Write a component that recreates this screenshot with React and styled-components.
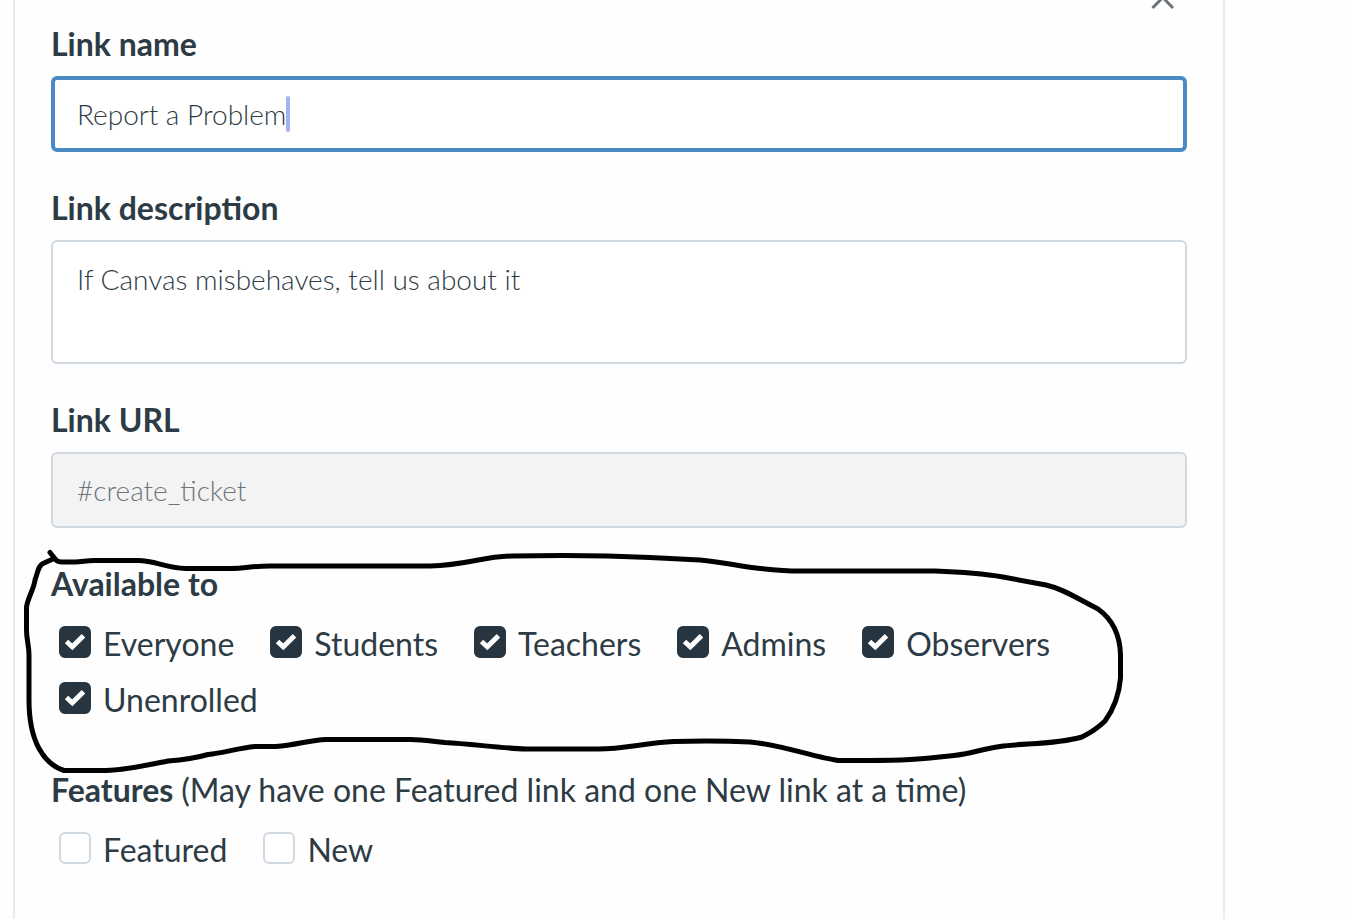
import React, { useState } from 'react'

import styled, { createGlobalStyle, css } from 'styled-components'

const audiences = ['Everyone', 'Students', 'Teachers', 'Admins', 'Observers', 'Unenrolled']
const features = ['Featured', 'New']

const CheckboxOption = ({ label, defaultChecked }) => (
    <Option>
        <BoxWrap>
            <Checkbox type="checkbox" defaultChecked={defaultChecked} />
            <CheckMark viewBox="0 0 32 32" aria-hidden="true">
                <path d="M7.5 15.5L13.3 20.8L24.5 9.8" />
            </CheckMark>
        </BoxWrap>
        {label}
    </Option>
)

const App = () => {
    const [name, setName] = useState('Report a Problem')

    return (
        <>
            <GlobalStyle />
            <Panel>
                <PanelHeader>
                    <CollapseButton type="button" aria-label="Collapse">
                        <svg viewBox="0 0 48 48" aria-hidden="true">
                            <path d="M13.5 32L23.8 21.5L34 32" />
                        </svg>
                    </CollapseButton>
                </PanelHeader>

                <Form>
                    <Field>
                        <Label htmlFor="link-name">Link name</Label>
                        <FocusedBox>
                            <NameInput
                                id="link-name"
                                value={name}
                                onChange={e => setName(e.target.value)}
                            />
                            <Caret />
                        </FocusedBox>
                    </Field>

                    <Field>
                        <Label htmlFor="link-description">Link description</Label>
                        <TextArea
                            id="link-description"
                            defaultValue="If Canvas misbehaves, tell us about it"
                        />
                    </Field>

                    <Field>
                        <Label htmlFor="link-url">Link URL</Label>
                        <UrlInput id="link-url" defaultValue="#create_ticket" disabled />
                    </Field>

                    <Circled>
                        <Group>
                            <Legend>Available to</Legend>
                            <Options>
                                {audiences.map(a => <CheckboxOption key={a} label={a} defaultChecked />)}
                            </Options>
                        </Group>
                        <PenCircle viewBox="20 545 1110 235" aria-hidden="true">
                            <path d="M50 552.5L56 560Q58 562 62 562H75C82 562 86 560.5 94 560.5H138C156 560.5 164 568 186 568.5H230C246 568.5 252 566 270 566H430C468 565 482 556.5 512 556C556 555 610 555.5 650 557.5L700 560C722 562 738 566 756 568C774 570 786 571 800 571H935C965 572 986 574 1003 577L1046 585C1064 589 1078 599 1098 609C1112 619 1120 634 1120.5 655V678C1119 697 1113 710 1105 721C1098 728 1090 733 1082 737C1054 745 1022 743 1000 746.5C982 749 970 754 954 755.5L930 758C906 761 868 760.5 838 760.5C814 757 778 744 750 742C728 741 694 741 674 741.5C644 743 624 749 598 749H526C500 748 472 744 445 742.5C430 741 424 739.5 410 739.5H326C310 740 296 745 276 746.5H255C238 748 224 753 208 754.5C196 758 182 760 168 761C148 765 126 770 106 770.5H64C44 764 29 742 29 700V655C29 645 26.5 640 26.5 630V607C28 597 34 589 35 580C38 572 38 566 43 563.5L54 558.5" />
                        </PenCircle>
                    </Circled>

                    <FeatureGroup>
                        <Legend>
                            Features <LegendNote>(May have one Featured link and one New link at a time)</LegendNote>
                        </Legend>
                        <Options>
                            {features.map(f => <CheckboxOption key={f} label={f} />)}
                        </Options>
                    </FeatureGroup>
                </Form>
            </Panel>
        </>
    )
}

export default App

const GlobalStyle = createGlobalStyle`
    * {
        box-sizing: border-box;
    }

    body {
        margin: 0;
        background: #fefefe;
        color: #2d3b45;
        font-family: Lato, sans-serif;
        font-size: 32px;
        line-height: 40px;
    }
`

const Panel = styled.main`
    min-height: 100vh;
    margin: 0 120px 0 13px;
    padding: 0 36px 40px;
    border: solid #e8eaec;
    border-width: 0 2px;
    display: flow-root;
`

// the panel is scrolled, so its header is half out of view
const PanelHeader = styled.header`
    display: flex;
    justify-content: flex-end;
    margin-top: -24px;
`

const CollapseButton = styled.button`
    width: 48px;
    height: 48px;
    padding: 0;
    border: 0;
    background: none;

    svg {
        display: block;
        fill: none;
        stroke: #6b7278;
        stroke-width: 3;
    }
`

const Form = styled.form`
    display: flex;
    flex-direction: column;
    gap: 36px;
`

const Field = styled.div`
    display: flex;
    flex-direction: column;
    gap: 12px;
`

const Label = styled.label`
    font-weight: 700;
`

const inputText = css`
    color: #2d3b45;
    font-family: inherit;
    font-size: 28px;
    font-weight: 300;
    line-height: 34px;
`

const inputBox = css`
    width: 100%;
    border: 2px solid #d0d9e1;
    border-radius: 6px;
    background: #fff;
`

const FocusedBox = styled.div`
    ${inputBox}
    display: flex;
    align-items: center;
    height: 76px;
    padding: 0 22px;
    border: 4px solid #4a8bc4;
`

const NameInput = styled.input`
    ${inputText}
    field-sizing: content;
    max-width: 100%;
    padding: 0;
    border: 0;
    outline: none;
    background: none;
    caret-color: transparent;
`

const Caret = styled.span`
    width: 4px;
    height: 36px;
    border-radius: 2px;
    background: #a3b1f1;
`

const TextArea = styled.textarea`
    ${inputText}
    ${inputBox}
    display: block;
    height: 124px;
    padding: 20px 24px;
    resize: none;
`

const UrlInput = styled.input`
    ${inputText}
    ${inputBox}
    height: 76px;
    padding: 0 24px;

    &:disabled {
        background: #f3f3f3;
        color: #6c757c;
    }
`

const Circled = styled.div`
    position: relative;
`

const Group = styled.fieldset`
    min-width: 0;
    margin: 0;
    padding: 0;
    border: 0;
`

const FeatureGroup = styled(Group)`
    margin-top: 14px;
`

const Legend = styled.legend`
    margin-bottom: 20px;
    padding: 0;
    font-weight: 700;
`

const LegendNote = styled.span`
    font-weight: 400;
`

const Options = styled.div`
    display: flex;
    flex-wrap: wrap;
    gap: 16px 36px;
    padding-left: 8px;
`

const Option = styled.label`
    display: flex;
    gap: 12px;
`

const BoxWrap = styled.span`
    position: relative;
    width: 32px;
    height: 32px;
    margin-top: 2px;
`

const CheckMark = styled.svg`
    position: absolute;
    inset: 0;
    width: 32px;
    height: 32px;
    fill: none;
    stroke: #fff;
    stroke-width: 5;
    pointer-events: none;
    visibility: hidden;
`

const Checkbox = styled.input`
    appearance: none;
    display: block;
    width: 32px;
    height: 32px;
    margin: 0;
    border: 2px solid #d0d9e1;
    border-radius: 6px;
    background: #fff;

    &:checked {
        border-color: #273540;
        background: #273540;
    }

    &:checked + ${CheckMark} {
        visibility: visible;
    }
`

// hand-drawn loop around the audience options
const PenCircle = styled.svg`
    position: absolute;
    top: -19px;
    left: -31px;
    width: 1110px;
    height: 235px;
    fill: none;
    stroke: #000;
    stroke-width: 5;
    stroke-linecap: round;
    stroke-linejoin: round;
    pointer-events: none;
`
